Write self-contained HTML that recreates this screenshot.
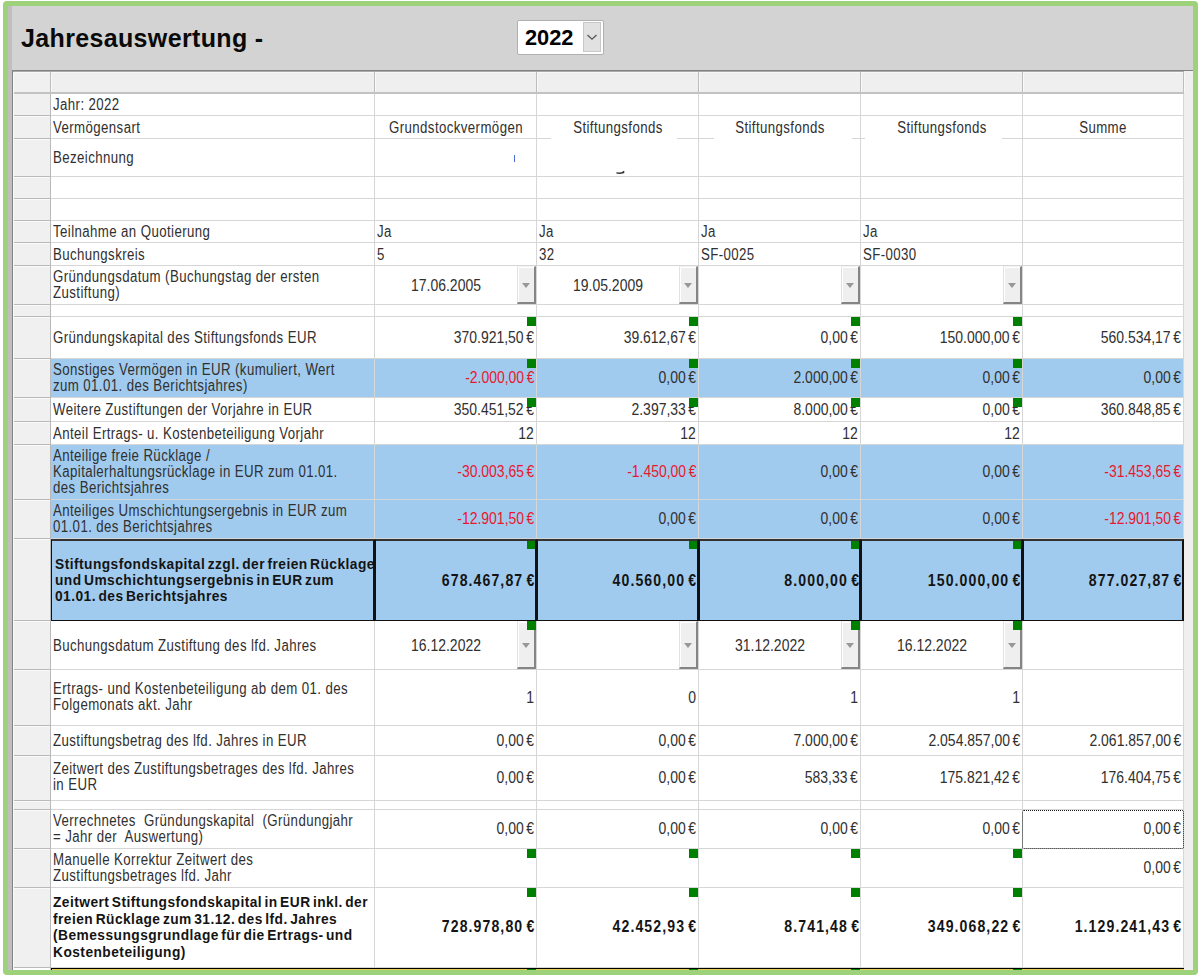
<!DOCTYPE html><html><head><meta charset="utf-8"><style>
html,body{margin:0;padding:0;background:#fff;}
body{width:1201px;height:976px;position:relative;overflow:hidden;font-family:"Liberation Sans", sans-serif;}
div{box-sizing:border-box;}
.ln{position:absolute;line-height:20px;white-space:pre;}
.gs{position:absolute;width:9px;height:9px;background:#008000;}
.btn{position:absolute;background:#efefef;border-left:1px solid #e2e2e2;border-top:1px solid #f4f4f4;border-right:2px solid #858585;border-bottom:2px solid #858585;box-shadow:inset 1px 1px 0 #fff;}
.btn i{position:absolute;left:50%;top:50%;margin-left:-4px;margin-top:-2px;width:0;height:0;border-left:4px solid transparent;border-right:4px solid transparent;border-top:5px solid #979797;}

</style></head><body>
<div style="position:absolute;left:3px;top:1px;width:1195px;height:974px;background:#9dd17a;border-radius:4px;"></div>
<div style="position:absolute;left:8px;top:6px;width:1185px;height:964px;background:#d3d3d3;"></div>
<div style="position:absolute;left:8px;top:6px;width:4px;height:964px;background:#bfbfbf;"></div>
<div style="position:absolute;left:21px;top:22.5px;font-size:25px;font-weight:bold;line-height:30px;color:#0a0a0a;letter-spacing:0.35px;white-space:pre;">Jahresauswertung -</div>
<div style="position:absolute;left:517px;top:20px;width:87px;height:35px;background:#fff;border:1px solid #b0b0b0;border-radius:2px;"></div>
<div style="position:absolute;left:525px;top:25px;font-size:21.8px;font-weight:bold;line-height:25px;color:#000;">2022</div>
<div style="position:absolute;left:583px;top:22px;width:18px;height:30px;background:#e1e1e1;border:1px solid #c8c8c8;"></div>
<svg style="position:absolute;left:586px;top:33px" width="12" height="8" viewBox="0 0 12 8"><path d="M1.5 2 L6 6.2 L10.5 2" fill="none" stroke="#555" stroke-width="1.3"/></svg>
<div style="position:absolute;left:12px;top:70px;width:1181px;height:900px;background:#fff;"></div>
<div style="position:absolute;left:1184px;top:71px;width:9px;height:899px;background:#efefef;"></div>
<div style="position:absolute;left:13px;top:71px;width:37px;height:899px;background:#f0f0f0;"></div>
<div style="position:absolute;left:51px;top:71px;width:1132px;height:22px;background:#efefef;"></div>
<div style="position:absolute;left:12px;top:70px;width:1181px;height:1px;background:#828282;"></div>
<div style="position:absolute;left:13px;top:71px;width:1171px;height:1px;background:#a9a9a9;"></div>
<div style="position:absolute;left:14px;top:72px;width:1169px;height:1px;background:#f8f8f8;"></div>
<div style="position:absolute;left:12px;top:70px;width:1px;height:900px;background:#828282;"></div>
<div style="position:absolute;left:51px;top:359px;width:1132px;height:38px;background:#a1cbee;"></div>
<div style="position:absolute;left:51px;top:445px;width:1132px;height:54px;background:#a1cbee;"></div>
<div style="position:absolute;left:51px;top:500px;width:1132px;height:38px;background:#a1cbee;"></div>
<div style="position:absolute;left:51px;top:539px;width:1132px;height:81px;background:#a1cbee;"></div>
<div style="position:absolute;left:13px;top:92px;width:1171px;height:2px;background:#c2c2c2;"></div>
<div style="position:absolute;left:51px;top:115px;width:1132px;height:1px;background:#d6d6d6;"></div>
<div style="position:absolute;left:13px;top:115px;width:37px;height:1px;background:#b9b9b9;"></div>
<div style="position:absolute;left:51px;top:138px;width:1132px;height:1px;background:#d6d6d6;"></div>
<div style="position:absolute;left:13px;top:138px;width:37px;height:1px;background:#b9b9b9;"></div>
<div style="position:absolute;left:51px;top:176px;width:1132px;height:1px;background:#d6d6d6;"></div>
<div style="position:absolute;left:13px;top:176px;width:37px;height:1px;background:#b9b9b9;"></div>
<div style="position:absolute;left:51px;top:198px;width:1132px;height:1px;background:#d6d6d6;"></div>
<div style="position:absolute;left:13px;top:198px;width:37px;height:1px;background:#b9b9b9;"></div>
<div style="position:absolute;left:51px;top:220px;width:1132px;height:1px;background:#d6d6d6;"></div>
<div style="position:absolute;left:13px;top:220px;width:37px;height:1px;background:#b9b9b9;"></div>
<div style="position:absolute;left:51px;top:242px;width:1132px;height:1px;background:#d6d6d6;"></div>
<div style="position:absolute;left:13px;top:242px;width:37px;height:1px;background:#b9b9b9;"></div>
<div style="position:absolute;left:51px;top:265px;width:1132px;height:1px;background:#d6d6d6;"></div>
<div style="position:absolute;left:13px;top:265px;width:37px;height:1px;background:#b9b9b9;"></div>
<div style="position:absolute;left:51px;top:304px;width:1132px;height:1px;background:#d6d6d6;"></div>
<div style="position:absolute;left:13px;top:304px;width:37px;height:1px;background:#b9b9b9;"></div>
<div style="position:absolute;left:51px;top:316px;width:1132px;height:1px;background:#d6d6d6;"></div>
<div style="position:absolute;left:13px;top:316px;width:37px;height:1px;background:#b9b9b9;"></div>
<div style="position:absolute;left:51px;top:358px;width:1132px;height:1px;background:#d6d6d6;"></div>
<div style="position:absolute;left:13px;top:358px;width:37px;height:1px;background:#b9b9b9;"></div>
<div style="position:absolute;left:51px;top:397px;width:1132px;height:1px;background:#d6d6d6;"></div>
<div style="position:absolute;left:13px;top:397px;width:37px;height:1px;background:#b9b9b9;"></div>
<div style="position:absolute;left:51px;top:421px;width:1132px;height:1px;background:#d6d6d6;"></div>
<div style="position:absolute;left:13px;top:421px;width:37px;height:1px;background:#b9b9b9;"></div>
<div style="position:absolute;left:51px;top:444px;width:1132px;height:1px;background:#d6d6d6;"></div>
<div style="position:absolute;left:13px;top:444px;width:37px;height:1px;background:#b9b9b9;"></div>
<div style="position:absolute;left:51px;top:499px;width:1132px;height:1px;background:#d6d6d6;"></div>
<div style="position:absolute;left:13px;top:499px;width:37px;height:1px;background:#b9b9b9;"></div>
<div style="position:absolute;left:51px;top:538px;width:1132px;height:1px;background:#d6d6d6;"></div>
<div style="position:absolute;left:13px;top:538px;width:37px;height:1px;background:#b9b9b9;"></div>
<div style="position:absolute;left:51px;top:620px;width:1132px;height:1px;background:#d6d6d6;"></div>
<div style="position:absolute;left:13px;top:620px;width:37px;height:1px;background:#b9b9b9;"></div>
<div style="position:absolute;left:51px;top:669px;width:1132px;height:1px;background:#d6d6d6;"></div>
<div style="position:absolute;left:13px;top:669px;width:37px;height:1px;background:#b9b9b9;"></div>
<div style="position:absolute;left:51px;top:725px;width:1132px;height:1px;background:#d6d6d6;"></div>
<div style="position:absolute;left:13px;top:725px;width:37px;height:1px;background:#b9b9b9;"></div>
<div style="position:absolute;left:51px;top:755px;width:1132px;height:1px;background:#d6d6d6;"></div>
<div style="position:absolute;left:13px;top:755px;width:37px;height:1px;background:#b9b9b9;"></div>
<div style="position:absolute;left:51px;top:800px;width:1132px;height:1px;background:#d6d6d6;"></div>
<div style="position:absolute;left:13px;top:800px;width:37px;height:1px;background:#b9b9b9;"></div>
<div style="position:absolute;left:51px;top:809px;width:1132px;height:1px;background:#d6d6d6;"></div>
<div style="position:absolute;left:13px;top:809px;width:37px;height:1px;background:#b9b9b9;"></div>
<div style="position:absolute;left:51px;top:848px;width:1132px;height:1px;background:#d6d6d6;"></div>
<div style="position:absolute;left:13px;top:848px;width:37px;height:1px;background:#b9b9b9;"></div>
<div style="position:absolute;left:51px;top:887px;width:1132px;height:1px;background:#d6d6d6;"></div>
<div style="position:absolute;left:13px;top:887px;width:37px;height:1px;background:#b9b9b9;"></div>
<div style="position:absolute;left:51px;top:967px;width:1132px;height:1px;background:#d6d6d6;"></div>
<div style="position:absolute;left:13px;top:967px;width:37px;height:1px;background:#b9b9b9;"></div>
<div style="position:absolute;left:14px;top:116px;width:36px;height:1px;background:#fafafa;"></div>
<div style="position:absolute;left:14px;top:139px;width:36px;height:1px;background:#fafafa;"></div>
<div style="position:absolute;left:14px;top:177px;width:36px;height:1px;background:#fafafa;"></div>
<div style="position:absolute;left:14px;top:199px;width:36px;height:1px;background:#fafafa;"></div>
<div style="position:absolute;left:14px;top:221px;width:36px;height:1px;background:#fafafa;"></div>
<div style="position:absolute;left:14px;top:243px;width:36px;height:1px;background:#fafafa;"></div>
<div style="position:absolute;left:14px;top:266px;width:36px;height:1px;background:#fafafa;"></div>
<div style="position:absolute;left:14px;top:305px;width:36px;height:1px;background:#fafafa;"></div>
<div style="position:absolute;left:14px;top:317px;width:36px;height:1px;background:#fafafa;"></div>
<div style="position:absolute;left:14px;top:359px;width:36px;height:1px;background:#fafafa;"></div>
<div style="position:absolute;left:14px;top:398px;width:36px;height:1px;background:#fafafa;"></div>
<div style="position:absolute;left:14px;top:422px;width:36px;height:1px;background:#fafafa;"></div>
<div style="position:absolute;left:14px;top:445px;width:36px;height:1px;background:#fafafa;"></div>
<div style="position:absolute;left:14px;top:500px;width:36px;height:1px;background:#fafafa;"></div>
<div style="position:absolute;left:14px;top:539px;width:36px;height:1px;background:#fafafa;"></div>
<div style="position:absolute;left:14px;top:621px;width:36px;height:1px;background:#fafafa;"></div>
<div style="position:absolute;left:14px;top:670px;width:36px;height:1px;background:#fafafa;"></div>
<div style="position:absolute;left:14px;top:726px;width:36px;height:1px;background:#fafafa;"></div>
<div style="position:absolute;left:14px;top:756px;width:36px;height:1px;background:#fafafa;"></div>
<div style="position:absolute;left:14px;top:801px;width:36px;height:1px;background:#fafafa;"></div>
<div style="position:absolute;left:14px;top:810px;width:36px;height:1px;background:#fafafa;"></div>
<div style="position:absolute;left:14px;top:849px;width:36px;height:1px;background:#fafafa;"></div>
<div style="position:absolute;left:14px;top:888px;width:36px;height:1px;background:#fafafa;"></div>
<div style="position:absolute;left:14px;top:968px;width:36px;height:1px;background:#fafafa;"></div>
<div style="position:absolute;left:13px;top:73px;width:1px;height:895px;background:#fbfbfb;"></div>
<div style="position:absolute;left:50px;top:72px;width:1px;height:20px;background:#bdbdbd;"></div>
<div style="position:absolute;left:51px;top:73px;width:1px;height:19px;background:#f9f9f9;"></div>
<div style="position:absolute;left:374px;top:72px;width:1px;height:20px;background:#bdbdbd;"></div>
<div style="position:absolute;left:375px;top:73px;width:1px;height:19px;background:#f9f9f9;"></div>
<div style="position:absolute;left:536px;top:72px;width:1px;height:20px;background:#bdbdbd;"></div>
<div style="position:absolute;left:537px;top:73px;width:1px;height:19px;background:#f9f9f9;"></div>
<div style="position:absolute;left:698px;top:72px;width:1px;height:20px;background:#bdbdbd;"></div>
<div style="position:absolute;left:699px;top:73px;width:1px;height:19px;background:#f9f9f9;"></div>
<div style="position:absolute;left:860px;top:72px;width:1px;height:20px;background:#bdbdbd;"></div>
<div style="position:absolute;left:861px;top:73px;width:1px;height:19px;background:#f9f9f9;"></div>
<div style="position:absolute;left:1022px;top:72px;width:1px;height:20px;background:#bdbdbd;"></div>
<div style="position:absolute;left:1023px;top:73px;width:1px;height:19px;background:#f9f9f9;"></div>
<div style="position:absolute;left:1183px;top:72px;width:1px;height:20px;background:#bdbdbd;"></div>
<div style="position:absolute;left:1184px;top:73px;width:1px;height:19px;background:#f9f9f9;"></div>
<div style="position:absolute;left:50px;top:94px;width:1px;height:876px;background:#b9b9b9;"></div>
<div style="position:absolute;left:374px;top:94px;width:1px;height:874px;background:#d6d6d6;"></div>
<div style="position:absolute;left:536px;top:94px;width:1px;height:874px;background:#d6d6d6;"></div>
<div style="position:absolute;left:698px;top:94px;width:1px;height:874px;background:#d6d6d6;"></div>
<div style="position:absolute;left:860px;top:94px;width:1px;height:874px;background:#d6d6d6;"></div>
<div style="position:absolute;left:1022px;top:94px;width:1px;height:874px;background:#d6d6d6;"></div>
<div style="position:absolute;left:1183px;top:94px;width:1px;height:874px;background:#d6d6d6;"></div>
<div style="position:absolute;left:51px;top:968px;width:1133px;height:1px;background:#000;"></div>
<div style="position:absolute;left:51px;top:969px;width:1133px;height:1px;background:#e3cf55;"></div>
<div style="position:absolute;left:51px;top:968px;width:1px;height:2px;background:#000;"></div>
<div style="position:absolute;left:13px;top:968px;width:37px;height:2px;background:#fff;"></div>
<div class="ln" style="left:53px;top:95.16px;font-size:15.6px;font-weight:normal;color:#303030;transform:scaleX(0.85);letter-spacing:0.47px;transform-origin:0 0;">Jahr: 2022</div>
<div class="ln" style="left:53px;top:117.66px;font-size:15.6px;font-weight:normal;color:#303030;transform:scaleX(0.85);letter-spacing:0.47px;transform-origin:0 0;">Vermögensart</div>
<div class="ln c" style="left:155.5px;width:600px;top:117.66px;font-size:15.6px;font-weight:normal;color:#303030;transform:scaleX(0.85);letter-spacing:0.47px;transform-origin:50% 0;text-align:center;">Grundstockvermögen</div>
<div class="ln c" style="left:317.5px;width:600px;top:117.66px;font-size:15.6px;font-weight:normal;color:#303030;transform:scaleX(0.85);letter-spacing:0.47px;transform-origin:50% 0;text-align:center;">Stiftungsfonds</div>
<div class="ln c" style="left:479.5px;width:600px;top:117.66px;font-size:15.6px;font-weight:normal;color:#303030;transform:scaleX(0.85);letter-spacing:0.47px;transform-origin:50% 0;text-align:center;">Stiftungsfonds</div>
<div class="ln c" style="left:641.5px;width:600px;top:117.66px;font-size:15.6px;font-weight:normal;color:#303030;transform:scaleX(0.85);letter-spacing:0.47px;transform-origin:50% 0;text-align:center;">Stiftungsfonds</div>
<div class="ln c" style="left:803.0px;width:600px;top:117.66px;font-size:15.6px;font-weight:normal;color:#303030;transform:scaleX(0.85);letter-spacing:0.47px;transform-origin:50% 0;text-align:center;">Summe</div>
<div class="ln" style="left:53px;top:148.16px;font-size:15.6px;font-weight:normal;color:#303030;transform:scaleX(0.85);letter-spacing:0.47px;transform-origin:0 0;">Bezeichnung</div>
<div style="position:absolute;left:551px;top:138px;width:126px;height:1px;background:#fff;"></div>
<div style="position:absolute;left:714px;top:138px;width:138px;height:1px;background:#fff;"></div>
<div style="position:absolute;left:865px;top:138px;width:137px;height:1px;background:#fff;"></div>
<div style="position:absolute;left:514px;top:155px;width:1px;height:7px;background:#4a6fd0;"></div>
<svg style="position:absolute;left:615px;top:169px" width="10" height="6" viewBox="0 0 10 6"><path d="M1.5 3.6 Q4 5 8.5 3.5 L8.5 2" fill="none" stroke="#333" stroke-width="1.6"/></svg>
<div class="ln" style="left:53px;top:222.16px;font-size:15.6px;font-weight:normal;color:#303030;transform:scaleX(0.85);letter-spacing:0.47px;transform-origin:0 0;">Teilnahme an Quotierung</div>
<div class="ln" style="left:377px;top:222.16px;font-size:15.6px;font-weight:normal;color:#303030;transform:scaleX(0.85);letter-spacing:0.47px;transform-origin:0 0;">Ja</div>
<div class="ln" style="left:539px;top:222.16px;font-size:15.6px;font-weight:normal;color:#303030;transform:scaleX(0.85);letter-spacing:0.47px;transform-origin:0 0;">Ja</div>
<div class="ln" style="left:701px;top:222.16px;font-size:15.6px;font-weight:normal;color:#303030;transform:scaleX(0.85);letter-spacing:0.47px;transform-origin:0 0;">Ja</div>
<div class="ln" style="left:863px;top:222.16px;font-size:15.6px;font-weight:normal;color:#303030;transform:scaleX(0.85);letter-spacing:0.47px;transform-origin:0 0;">Ja</div>
<div class="ln" style="left:53px;top:244.66px;font-size:15.6px;font-weight:normal;color:#303030;transform:scaleX(0.85);letter-spacing:0.47px;transform-origin:0 0;">Buchungskreis</div>
<div class="ln" style="left:377px;top:244.66px;font-size:15.6px;font-weight:normal;color:#303030;transform:scaleX(0.85);letter-spacing:0.47px;transform-origin:0 0;">5</div>
<div class="ln" style="left:539px;top:244.66px;font-size:15.6px;font-weight:normal;color:#303030;transform:scaleX(0.85);letter-spacing:0.47px;transform-origin:0 0;">32</div>
<div class="ln" style="left:701px;top:244.66px;font-size:15.6px;font-weight:normal;color:#303030;transform:scaleX(0.85);letter-spacing:0.47px;transform-origin:0 0;">SF-0025</div>
<div class="ln" style="left:863px;top:244.66px;font-size:15.6px;font-weight:normal;color:#303030;transform:scaleX(0.85);letter-spacing:0.47px;transform-origin:0 0;">SF-0030</div>
<div class="ln" style="left:53px;top:266.61px;font-size:15.6px;font-weight:normal;color:#303030;transform:scaleX(0.85);letter-spacing:0.47px;transform-origin:0 0;">Gründungsdatum (Buchungstag der ersten</div>
<div class="ln" style="left:53px;top:283.01px;font-size:15.6px;font-weight:normal;color:#303030;transform:scaleX(0.85);letter-spacing:0.47px;transform-origin:0 0;">Zustiftung)</div>
<div class="ln c" style="left:146.0px;width:600px;top:275.66px;font-size:16px;font-weight:normal;color:#303030;transform:scaleX(0.872);word-spacing:-1.5px;transform-origin:50% 0;text-align:center;">17.06.2005</div>
<div class="btn" style="left:517px;top:266px;width:19px;height:38px;"><i></i></div>
<div class="ln c" style="left:308.0px;width:600px;top:275.66px;font-size:16px;font-weight:normal;color:#303030;transform:scaleX(0.872);word-spacing:-1.5px;transform-origin:50% 0;text-align:center;">19.05.2009</div>
<div class="btn" style="left:679px;top:266px;width:19px;height:38px;"><i></i></div>
<div class="btn" style="left:841px;top:266px;width:19px;height:38px;"><i></i></div>
<div class="btn" style="left:1003px;top:266px;width:19px;height:38px;"><i></i></div>
<div class="ln" style="left:53px;top:328.16px;font-size:15.6px;font-weight:normal;color:#303030;transform:scaleX(0.85);letter-spacing:0.47px;transform-origin:0 0;">Gründungskapital des Stiftungsfonds EUR</div>
<div class="ln" style="right:667px;top:328.16px;font-size:16px;font-weight:normal;color:#303030;transform:scaleX(0.872);word-spacing:-1.5px;transform-origin:100% 0;text-align:right;">370.921,50 €</div>
<div class="ln" style="right:505px;top:328.16px;font-size:16px;font-weight:normal;color:#303030;transform:scaleX(0.872);word-spacing:-1.5px;transform-origin:100% 0;text-align:right;">39.612,67 €</div>
<div class="ln" style="right:343px;top:328.16px;font-size:16px;font-weight:normal;color:#303030;transform:scaleX(0.872);word-spacing:-1.5px;transform-origin:100% 0;text-align:right;">0,00 €</div>
<div class="ln" style="right:181px;top:328.16px;font-size:16px;font-weight:normal;color:#303030;transform:scaleX(0.872);word-spacing:-1.5px;transform-origin:100% 0;text-align:right;">150.000,00 €</div>
<div class="ln" style="right:20px;top:328.16px;font-size:16px;font-weight:normal;color:#303030;transform:scaleX(0.872);word-spacing:-1.5px;transform-origin:100% 0;text-align:right;">560.534,17 €</div>
<div class="gs" style="left:527px;top:317px"></div>
<div class="gs" style="left:689px;top:317px"></div>
<div class="gs" style="left:851px;top:317px"></div>
<div class="gs" style="left:1013px;top:317px"></div>
<div class="ln" style="left:53px;top:359.51px;font-size:15.6px;font-weight:normal;color:#303030;transform:scaleX(0.85);letter-spacing:0.47px;transform-origin:0 0;">Sonstiges Vermögen in EUR (kumuliert, Wert</div>
<div class="ln" style="left:53px;top:375.51px;font-size:15.6px;font-weight:normal;color:#303030;transform:scaleX(0.85);letter-spacing:0.47px;transform-origin:0 0;">zum 01.01. des Berichtsjahres)</div>
<div class="ln" style="right:667px;top:368.09px;font-size:16px;font-weight:normal;color:#e8182e;transform:scaleX(0.872);word-spacing:-1.5px;transform-origin:100% 0;text-align:right;">-2.000,00 €</div>
<div class="ln" style="right:505px;top:368.09px;font-size:16px;font-weight:normal;color:#303030;transform:scaleX(0.872);word-spacing:-1.5px;transform-origin:100% 0;text-align:right;">0,00 €</div>
<div class="ln" style="right:343px;top:368.09px;font-size:16px;font-weight:normal;color:#303030;transform:scaleX(0.872);word-spacing:-1.5px;transform-origin:100% 0;text-align:right;">2.000,00 €</div>
<div class="ln" style="right:181px;top:368.09px;font-size:16px;font-weight:normal;color:#303030;transform:scaleX(0.872);word-spacing:-1.5px;transform-origin:100% 0;text-align:right;">0,00 €</div>
<div class="ln" style="right:20px;top:368.09px;font-size:16px;font-weight:normal;color:#303030;transform:scaleX(0.872);word-spacing:-1.5px;transform-origin:100% 0;text-align:right;">0,00 €</div>
<div class="gs" style="left:527px;top:359px"></div>
<div class="gs" style="left:689px;top:359px"></div>
<div class="gs" style="left:851px;top:359px"></div>
<div class="gs" style="left:1013px;top:359px"></div>
<div class="ln" style="left:53px;top:400.16px;font-size:15.6px;font-weight:normal;color:#303030;transform:scaleX(0.85);letter-spacing:0.47px;transform-origin:0 0;">Weitere Zustiftungen der Vorjahre in EUR</div>
<div class="ln" style="right:667px;top:400.16px;font-size:16px;font-weight:normal;color:#303030;transform:scaleX(0.872);word-spacing:-1.5px;transform-origin:100% 0;text-align:right;">350.451,52 €</div>
<div class="ln" style="right:505px;top:400.16px;font-size:16px;font-weight:normal;color:#303030;transform:scaleX(0.872);word-spacing:-1.5px;transform-origin:100% 0;text-align:right;">2.397,33 €</div>
<div class="ln" style="right:343px;top:400.16px;font-size:16px;font-weight:normal;color:#303030;transform:scaleX(0.872);word-spacing:-1.5px;transform-origin:100% 0;text-align:right;">8.000,00 €</div>
<div class="ln" style="right:181px;top:400.16px;font-size:16px;font-weight:normal;color:#303030;transform:scaleX(0.872);word-spacing:-1.5px;transform-origin:100% 0;text-align:right;">0,00 €</div>
<div class="ln" style="right:20px;top:400.16px;font-size:16px;font-weight:normal;color:#303030;transform:scaleX(0.872);word-spacing:-1.5px;transform-origin:100% 0;text-align:right;">360.848,85 €</div>
<div class="gs" style="left:527px;top:398px"></div>
<div class="gs" style="left:689px;top:398px"></div>
<div class="gs" style="left:851px;top:398px"></div>
<div class="gs" style="left:1013px;top:398px"></div>
<div class="ln" style="left:53px;top:423.66px;font-size:15.6px;font-weight:normal;color:#303030;transform:scaleX(0.85);letter-spacing:0.47px;transform-origin:0 0;">Anteil Ertrags- u. Kostenbeteiligung Vorjahr</div>
<div class="ln" style="right:667px;top:423.66px;font-size:16px;font-weight:normal;color:#303030;transform:scaleX(0.872);word-spacing:-1.5px;transform-origin:100% 0;text-align:right;">12</div>
<div class="ln" style="right:505px;top:423.66px;font-size:16px;font-weight:normal;color:#303030;transform:scaleX(0.872);word-spacing:-1.5px;transform-origin:100% 0;text-align:right;">12</div>
<div class="ln" style="right:343px;top:423.66px;font-size:16px;font-weight:normal;color:#303030;transform:scaleX(0.872);word-spacing:-1.5px;transform-origin:100% 0;text-align:right;">12</div>
<div class="ln" style="right:181px;top:423.66px;font-size:16px;font-weight:normal;color:#303030;transform:scaleX(0.872);word-spacing:-1.5px;transform-origin:100% 0;text-align:right;">12</div>
<div class="ln" style="left:53px;top:445.81px;font-size:15.6px;font-weight:normal;color:#303030;transform:scaleX(0.85);letter-spacing:0.47px;transform-origin:0 0;">Anteilige freie Rücklage /</div>
<div class="ln" style="left:53px;top:462.06px;font-size:15.6px;font-weight:normal;color:#303030;transform:scaleX(0.85);letter-spacing:0.47px;transform-origin:0 0;">Kapitalerhaltungsrücklage in EUR zum 01.01.</div>
<div class="ln" style="left:53px;top:478.31px;font-size:15.6px;font-weight:normal;color:#303030;transform:scaleX(0.85);letter-spacing:0.47px;transform-origin:0 0;">des Berichtsjahres</div>
<div class="ln" style="right:667px;top:462.36px;font-size:16px;font-weight:normal;color:#e8182e;transform:scaleX(0.872);word-spacing:-1.5px;transform-origin:100% 0;text-align:right;">-30.003,65 €</div>
<div class="ln" style="right:505px;top:462.36px;font-size:16px;font-weight:normal;color:#e8182e;transform:scaleX(0.872);word-spacing:-1.5px;transform-origin:100% 0;text-align:right;">-1.450,00 €</div>
<div class="ln" style="right:343px;top:462.36px;font-size:16px;font-weight:normal;color:#303030;transform:scaleX(0.872);word-spacing:-1.5px;transform-origin:100% 0;text-align:right;">0,00 €</div>
<div class="ln" style="right:181px;top:462.36px;font-size:16px;font-weight:normal;color:#303030;transform:scaleX(0.872);word-spacing:-1.5px;transform-origin:100% 0;text-align:right;">0,00 €</div>
<div class="ln" style="right:20px;top:462.36px;font-size:16px;font-weight:normal;color:#e8182e;transform:scaleX(0.872);word-spacing:-1.5px;transform-origin:100% 0;text-align:right;">-31.453,65 €</div>
<div class="ln" style="left:53px;top:501.31px;font-size:15.6px;font-weight:normal;color:#303030;transform:scaleX(0.85);letter-spacing:0.47px;transform-origin:0 0;">Anteiliges Umschichtungsergebnis in EUR zum</div>
<div class="ln" style="left:53px;top:517.31px;font-size:15.6px;font-weight:normal;color:#303030;transform:scaleX(0.85);letter-spacing:0.47px;transform-origin:0 0;">01.01. des Berichtsjahres</div>
<div class="ln" style="right:667px;top:509.49px;font-size:16px;font-weight:normal;color:#e8182e;transform:scaleX(0.872);word-spacing:-1.5px;transform-origin:100% 0;text-align:right;">-12.901,50 €</div>
<div class="ln" style="right:505px;top:509.49px;font-size:16px;font-weight:normal;color:#303030;transform:scaleX(0.872);word-spacing:-1.5px;transform-origin:100% 0;text-align:right;">0,00 €</div>
<div class="ln" style="right:343px;top:509.49px;font-size:16px;font-weight:normal;color:#303030;transform:scaleX(0.872);word-spacing:-1.5px;transform-origin:100% 0;text-align:right;">0,00 €</div>
<div class="ln" style="right:181px;top:509.49px;font-size:16px;font-weight:normal;color:#303030;transform:scaleX(0.872);word-spacing:-1.5px;transform-origin:100% 0;text-align:right;">0,00 €</div>
<div class="ln" style="right:20px;top:509.49px;font-size:16px;font-weight:normal;color:#e8182e;transform:scaleX(0.872);word-spacing:-1.5px;transform-origin:100% 0;text-align:right;">-12.901,50 €</div>
<div style="position:absolute;left:51px;top:539px;width:324px;height:82px;border:1px solid #111;border-width:2px 2px 1px 1px;border-top-color:#333;"></div>
<div style="position:absolute;left:375px;top:539px;width:162px;height:82px;border:1px solid #111;border-width:2px 2px 1px 1px;border-top-color:#333;"></div>
<div style="position:absolute;left:537px;top:539px;width:162px;height:82px;border:1px solid #111;border-width:2px 2px 1px 1px;border-top-color:#333;"></div>
<div style="position:absolute;left:699px;top:539px;width:162px;height:82px;border:1px solid #111;border-width:2px 2px 1px 1px;border-top-color:#333;"></div>
<div style="position:absolute;left:861px;top:539px;width:162px;height:82px;border:1px solid #111;border-width:2px 2px 1px 1px;border-top-color:#333;"></div>
<div style="position:absolute;left:1023px;top:539px;width:161px;height:82px;border:1px solid #111;border-width:2px 2px 1px 1px;border-top-color:#333;"></div>
<div style="position:absolute;left:51px;top:539px;width:322px;height:81px;overflow:hidden;">
<div class="ln" style="left:4px;top:15.16px;font-size:15px;font-weight:bold;color:#141414;letter-spacing:0.5px;word-spacing:-2px;transform:scaleX(0.917);transform-origin:0 0;">Stiftungsfondskapital zzgl. der freien Rücklage</div>
<div class="ln" style="left:4px;top:31.06px;font-size:15px;font-weight:bold;color:#141414;letter-spacing:0.5px;word-spacing:-2px;transform:scaleX(0.917);transform-origin:0 0;">und Umschichtungsergebnis in EUR zum</div>
<div class="ln" style="left:4px;top:46.96px;font-size:15px;font-weight:bold;color:#141414;letter-spacing:0.5px;word-spacing:-2px;transform:scaleX(0.917);transform-origin:0 0;">01.01. des Berichtsjahres</div>
</div>
<div class="ln" style="right:666.5px;top:571.41px;font-size:16.0px;font-weight:bold;color:#141414;transform:scaleX(0.88);letter-spacing:1.25px;word-spacing:-2px;transform-origin:100% 0;text-align:right;margin-right:-1.25px;">678.467,87 €</div>
<div class="ln" style="right:504.5px;top:571.41px;font-size:16.0px;font-weight:bold;color:#141414;transform:scaleX(0.88);letter-spacing:1.25px;word-spacing:-2px;transform-origin:100% 0;text-align:right;margin-right:-1.25px;">40.560,00 €</div>
<div class="ln" style="right:342.5px;top:571.41px;font-size:16.0px;font-weight:bold;color:#141414;transform:scaleX(0.88);letter-spacing:1.25px;word-spacing:-2px;transform-origin:100% 0;text-align:right;margin-right:-1.25px;">8.000,00 €</div>
<div class="ln" style="right:180.5px;top:571.41px;font-size:16.0px;font-weight:bold;color:#141414;transform:scaleX(0.88);letter-spacing:1.25px;word-spacing:-2px;transform-origin:100% 0;text-align:right;margin-right:-1.25px;">150.000,00 €</div>
<div class="ln" style="right:19.5px;top:571.41px;font-size:16.0px;font-weight:bold;color:#141414;transform:scaleX(0.88);letter-spacing:1.25px;word-spacing:-2px;transform-origin:100% 0;text-align:right;margin-right:-1.25px;">877.027,87 €</div>
<div class="gs" style="left:527px;top:541px;width:8px;height:8px;"></div>
<div class="gs" style="left:689px;top:541px;width:8px;height:8px;"></div>
<div class="gs" style="left:851px;top:541px;width:8px;height:8px;"></div>
<div class="gs" style="left:1013px;top:541px;width:8px;height:8px;"></div>
<div class="ln" style="left:53px;top:635.66px;font-size:15.6px;font-weight:normal;color:#303030;transform:scaleX(0.85);letter-spacing:0.47px;transform-origin:0 0;">Buchungsdatum Zustiftung des lfd. Jahres</div>
<div class="ln c" style="left:146.0px;width:600px;top:635.66px;font-size:16px;font-weight:normal;color:#303030;transform:scaleX(0.872);word-spacing:-1.5px;transform-origin:50% 0;text-align:center;">16.12.2022</div>
<div class="btn" style="left:517px;top:621px;width:19px;height:48px;"><i></i></div>
<div class="btn" style="left:679px;top:621px;width:19px;height:48px;"><i></i></div>
<div class="ln c" style="left:470.0px;width:600px;top:635.66px;font-size:16px;font-weight:normal;color:#303030;transform:scaleX(0.872);word-spacing:-1.5px;transform-origin:50% 0;text-align:center;">31.12.2022</div>
<div class="btn" style="left:841px;top:621px;width:19px;height:48px;"><i></i></div>
<div class="ln c" style="left:632.0px;width:600px;top:635.66px;font-size:16px;font-weight:normal;color:#303030;transform:scaleX(0.872);word-spacing:-1.5px;transform-origin:50% 0;text-align:center;">16.12.2022</div>
<div class="btn" style="left:1003px;top:621px;width:19px;height:48px;"><i></i></div>
<div class="gs" style="left:527px;top:621px"></div>
<div class="gs" style="left:851px;top:621px"></div>
<div class="gs" style="left:1013px;top:621px"></div>
<div class="ln" style="left:53px;top:679.04px;font-size:15.6px;font-weight:normal;color:#303030;transform:scaleX(0.85);letter-spacing:0.47px;transform-origin:0 0;">Ertrags- und Kostenbeteiligung ab dem 01. des</div>
<div class="ln" style="left:53px;top:695.49px;font-size:15.6px;font-weight:normal;color:#303030;transform:scaleX(0.85);letter-spacing:0.47px;transform-origin:0 0;">Folgemonats akt. Jahr</div>
<div class="ln" style="right:667px;top:687.71px;font-size:16px;font-weight:normal;color:#303030;transform:scaleX(0.872);word-spacing:-1.5px;transform-origin:100% 0;text-align:right;">1</div>
<div class="ln" style="right:505px;top:687.71px;font-size:16px;font-weight:normal;color:#303030;transform:scaleX(0.872);word-spacing:-1.5px;transform-origin:100% 0;text-align:right;">0</div>
<div class="ln" style="right:343px;top:687.71px;font-size:16px;font-weight:normal;color:#303030;transform:scaleX(0.872);word-spacing:-1.5px;transform-origin:100% 0;text-align:right;">1</div>
<div class="ln" style="right:181px;top:687.71px;font-size:16px;font-weight:normal;color:#303030;transform:scaleX(0.872);word-spacing:-1.5px;transform-origin:100% 0;text-align:right;">1</div>
<div class="ln" style="left:53px;top:731.16px;font-size:15.6px;font-weight:normal;color:#303030;transform:scaleX(0.85);letter-spacing:0.47px;transform-origin:0 0;">Zustiftungsbetrag des lfd. Jahres in EUR</div>
<div class="ln" style="right:667px;top:731.16px;font-size:16px;font-weight:normal;color:#303030;transform:scaleX(0.872);word-spacing:-1.5px;transform-origin:100% 0;text-align:right;">0,00 €</div>
<div class="ln" style="right:505px;top:731.16px;font-size:16px;font-weight:normal;color:#303030;transform:scaleX(0.872);word-spacing:-1.5px;transform-origin:100% 0;text-align:right;">0,00 €</div>
<div class="ln" style="right:343px;top:731.16px;font-size:16px;font-weight:normal;color:#303030;transform:scaleX(0.872);word-spacing:-1.5px;transform-origin:100% 0;text-align:right;">7.000,00 €</div>
<div class="ln" style="right:181px;top:731.16px;font-size:16px;font-weight:normal;color:#303030;transform:scaleX(0.872);word-spacing:-1.5px;transform-origin:100% 0;text-align:right;">2.054.857,00 €</div>
<div class="ln" style="right:20px;top:731.16px;font-size:16px;font-weight:normal;color:#303030;transform:scaleX(0.872);word-spacing:-1.5px;transform-origin:100% 0;text-align:right;">2.061.857,00 €</div>
<div class="ln" style="left:53px;top:759.16px;font-size:15.6px;font-weight:normal;color:#303030;transform:scaleX(0.85);letter-spacing:0.47px;transform-origin:0 0;">Zeitwert des Zustiftungsbetrages des lfd. Jahres</div>
<div class="ln" style="left:53px;top:775.26px;font-size:15.6px;font-weight:normal;color:#303030;transform:scaleX(0.85);letter-spacing:0.47px;transform-origin:0 0;">in EUR</div>
<div class="ln" style="right:667px;top:767.94px;font-size:16px;font-weight:normal;color:#303030;transform:scaleX(0.872);word-spacing:-1.5px;transform-origin:100% 0;text-align:right;">0,00 €</div>
<div class="ln" style="right:505px;top:767.94px;font-size:16px;font-weight:normal;color:#303030;transform:scaleX(0.872);word-spacing:-1.5px;transform-origin:100% 0;text-align:right;">0,00 €</div>
<div class="ln" style="right:343px;top:767.94px;font-size:16px;font-weight:normal;color:#303030;transform:scaleX(0.872);word-spacing:-1.5px;transform-origin:100% 0;text-align:right;">583,33 €</div>
<div class="ln" style="right:181px;top:767.94px;font-size:16px;font-weight:normal;color:#303030;transform:scaleX(0.872);word-spacing:-1.5px;transform-origin:100% 0;text-align:right;">175.821,42 €</div>
<div class="ln" style="right:20px;top:767.94px;font-size:16px;font-weight:normal;color:#303030;transform:scaleX(0.872);word-spacing:-1.5px;transform-origin:100% 0;text-align:right;">176.404,75 €</div>
<div class="ln" style="left:53px;top:810.71px;font-size:15.6px;font-weight:normal;color:#303030;transform:scaleX(0.85);letter-spacing:0.47px;transform-origin:0 0;">Verrechnetes  Gründungskapital  (Gründungjahr</div>
<div class="ln" style="left:53px;top:826.91px;font-size:15.6px;font-weight:normal;color:#303030;transform:scaleX(0.85);letter-spacing:0.47px;transform-origin:0 0;">= Jahr der  Auswertung)</div>
<div class="ln" style="right:667px;top:819.24px;font-size:16px;font-weight:normal;color:#303030;transform:scaleX(0.872);word-spacing:-1.5px;transform-origin:100% 0;text-align:right;">0,00 €</div>
<div class="ln" style="right:505px;top:819.24px;font-size:16px;font-weight:normal;color:#303030;transform:scaleX(0.872);word-spacing:-1.5px;transform-origin:100% 0;text-align:right;">0,00 €</div>
<div class="ln" style="right:343px;top:819.24px;font-size:16px;font-weight:normal;color:#303030;transform:scaleX(0.872);word-spacing:-1.5px;transform-origin:100% 0;text-align:right;">0,00 €</div>
<div class="ln" style="right:181px;top:819.24px;font-size:16px;font-weight:normal;color:#303030;transform:scaleX(0.872);word-spacing:-1.5px;transform-origin:100% 0;text-align:right;">0,00 €</div>
<div class="ln" style="right:20px;top:819.24px;font-size:16px;font-weight:normal;color:#303030;transform:scaleX(0.872);word-spacing:-1.5px;transform-origin:100% 0;text-align:right;">0,00 €</div>
<div style="position:absolute;left:1022px;top:810px;width:162px;height:39px;border:1px dotted #1a1a1a;border-radius:2px;"></div>
<div class="ln" style="left:53px;top:849.69px;font-size:15.6px;font-weight:normal;color:#303030;transform:scaleX(0.85);letter-spacing:0.47px;transform-origin:0 0;">Manuelle Korrektur Zeitwert des</div>
<div class="ln" style="left:53px;top:865.64px;font-size:15.6px;font-weight:normal;color:#303030;transform:scaleX(0.85);letter-spacing:0.47px;transform-origin:0 0;">Zustiftungsbetrages lfd. Jahr</div>
<div class="ln" style="right:20px;top:858.16px;font-size:16px;font-weight:normal;color:#303030;transform:scaleX(0.872);word-spacing:-1.5px;transform-origin:100% 0;text-align:right;">0,00 €</div>
<div class="gs" style="left:527px;top:849px"></div>
<div class="gs" style="left:689px;top:849px"></div>
<div class="gs" style="left:851px;top:849px"></div>
<div class="gs" style="left:1013px;top:849px"></div>
<div class="ln" style="left:53px;top:892.46px;font-size:15px;font-weight:bold;color:#141414;transform:scaleX(0.917);letter-spacing:0.5px;word-spacing:-2px;transform-origin:0 0;">Zeitwert Stiftungsfondskapital in EUR inkl. der</div>
<div class="ln" style="left:53px;top:908.96px;font-size:15px;font-weight:bold;color:#141414;transform:scaleX(0.917);letter-spacing:0.5px;word-spacing:-2px;transform-origin:0 0;">freien Rücklage zum 31.12. des lfd. Jahres</div>
<div class="ln" style="left:53px;top:925.46px;font-size:15px;font-weight:bold;color:#141414;transform:scaleX(0.917);letter-spacing:0.5px;word-spacing:-2px;transform-origin:0 0;">(Bemessungsgrundlage für die Ertrags- und</div>
<div class="ln" style="left:53px;top:941.96px;font-size:15px;font-weight:bold;color:#141414;transform:scaleX(0.917);letter-spacing:0.5px;word-spacing:-2px;transform-origin:0 0;">Kostenbeteiligung)</div>
<div class="ln" style="right:666.5px;top:916.99px;font-size:16.0px;font-weight:bold;color:#141414;transform:scaleX(0.88);letter-spacing:1.25px;word-spacing:-2px;transform-origin:100% 0;text-align:right;margin-right:-1.25px;">728.978,80 €</div>
<div class="ln" style="right:504.5px;top:916.99px;font-size:16.0px;font-weight:bold;color:#141414;transform:scaleX(0.88);letter-spacing:1.25px;word-spacing:-2px;transform-origin:100% 0;text-align:right;margin-right:-1.25px;">42.452,93 €</div>
<div class="ln" style="right:342.5px;top:916.99px;font-size:16.0px;font-weight:bold;color:#141414;transform:scaleX(0.88);letter-spacing:1.25px;word-spacing:-2px;transform-origin:100% 0;text-align:right;margin-right:-1.25px;">8.741,48 €</div>
<div class="ln" style="right:180.5px;top:916.99px;font-size:16.0px;font-weight:bold;color:#141414;transform:scaleX(0.88);letter-spacing:1.25px;word-spacing:-2px;transform-origin:100% 0;text-align:right;margin-right:-1.25px;">349.068,22 €</div>
<div class="ln" style="right:19.5px;top:916.99px;font-size:16.0px;font-weight:bold;color:#141414;transform:scaleX(0.88);letter-spacing:1.25px;word-spacing:-2px;transform-origin:100% 0;text-align:right;margin-right:-1.25px;">1.129.241,43 €</div>
<div class="gs" style="left:527px;top:888px"></div>
<div class="gs" style="left:689px;top:888px"></div>
<div class="gs" style="left:851px;top:888px"></div>
<div class="gs" style="left:1013px;top:888px"></div>
<div class="gs" style="left:527px;top:969px;height:1px;"></div>
<div class="gs" style="left:689px;top:969px;height:1px;"></div>
<div class="gs" style="left:851px;top:969px;height:1px;"></div>
<div class="gs" style="left:1013px;top:969px;height:1px;"></div>
</body></html>
